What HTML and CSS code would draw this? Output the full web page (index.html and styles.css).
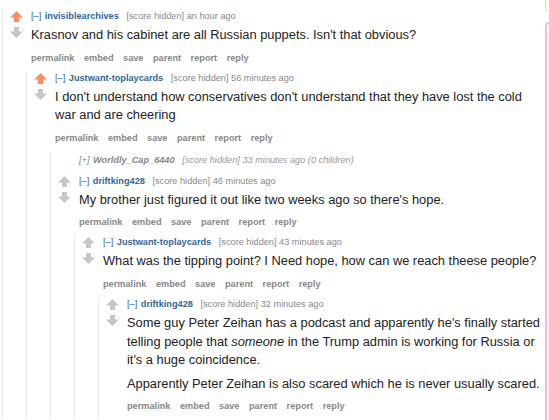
FILE: index.html
```html
<!DOCTYPE html>
<html>

<head>
    <title>Comments</title>
    <link rel="stylesheet" href="styles.css">
</head>

<body>
    <div class="page">
        <div class="thread">
            <div class="comment">
                <div class="row">
                    <div class="midcol">
                        <svg class="arrow up upmod" viewBox="0 0 15 14"><polygon points="7.5,1 14,7.5 10,7.5 10,12 5,12 5,7.5 1,7.5" /></svg>
                        <svg class="arrow down" viewBox="0 0 15 14"><polygon points="7.5,13 14,6.5 10,6.5 10,2 5,2 5,6.5 1,6.5" /></svg>
                    </div>
                    <div class="entry">
                        <p class="tagline"><a class="expand">[–]</a> <a class="author">invisiblearchives</a> <span class="score">[score hidden]</span> <span class="time">an hour ago</span></p>
                        <div class="md">
                            <p>Krasnov and his cabinet are all Russian puppets. Isn't that obvious?</p>
                        </div>
                        <ul class="flat-list">
                            <li>permalink</li><li>embed</li><li>save</li><li>parent</li><li>report</li><li>reply</li>
                        </ul>
                    </div>
                </div>

                <div class="comment">
                    <div class="row">
                        <div class="midcol">
                            <svg class="arrow up upmod" viewBox="0 0 15 14"><polygon points="7.5,1 14,7.5 10,7.5 10,12 5,12 5,7.5 1,7.5" /></svg>
                            <svg class="arrow down" viewBox="0 0 15 14"><polygon points="7.5,13 14,6.5 10,6.5 10,2 5,2 5,6.5 1,6.5" /></svg>
                        </div>
                        <div class="entry">
                            <p class="tagline"><a class="expand">[–]</a> <a class="author">Justwant-toplaycards</a> <span class="score">[score hidden]</span> <span class="time">56 minutes ago</span></p>
                            <div class="md">
                                <p>I don't understand how conservatives don't understand that they have lost the cold war and are cheering</p>
                            </div>
                            <ul class="flat-list">
                                <li>permalink</li><li>embed</li><li>save</li><li>parent</li><li>report</li><li>reply</li>
                            </ul>
                        </div>
                    </div>

                    <div class="comment collapsed">
                        <div class="row">
                            <div class="midcol"></div>
                            <div class="entry">
                                <p class="tagline"><a class="expand">[+]</a> <a class="author">Worldly_Cap_6440</a> <span class="score">[score hidden]</span> <span class="time">33 minutes ago</span> (0 children)</p>
                            </div>
                        </div>
                    </div>

                    <div class="comment">
                        <div class="row">
                            <div class="midcol">
                                <svg class="arrow up" viewBox="0 0 15 14"><polygon points="7.5,1 14,7.5 10,7.5 10,12 5,12 5,7.5 1,7.5" /></svg>
                                <svg class="arrow down" viewBox="0 0 15 14"><polygon points="7.5,13 14,6.5 10,6.5 10,2 5,2 5,6.5 1,6.5" /></svg>
                            </div>
                            <div class="entry">
                                <p class="tagline"><a class="expand">[–]</a> <a class="author">driftking428</a> <span class="score">[score hidden]</span> <span class="time">46 minutes ago</span></p>
                                <div class="md">
                                    <p>My brother just figured it out like two weeks ago so there's hope.</p>
                                </div>
                                <ul class="flat-list">
                                    <li>permalink</li><li>embed</li><li>save</li><li>parent</li><li>report</li><li>reply</li>
                                </ul>
                            </div>
                        </div>

                        <div class="comment">
                            <div class="row">
                                <div class="midcol">
                                    <svg class="arrow up" viewBox="0 0 15 14"><polygon points="7.5,1 14,7.5 10,7.5 10,12 5,12 5,7.5 1,7.5" /></svg>
                                    <svg class="arrow down" viewBox="0 0 15 14"><polygon points="7.5,13 14,6.5 10,6.5 10,2 5,2 5,6.5 1,6.5" /></svg>
                                </div>
                                <div class="entry">
                                    <p class="tagline"><a class="expand">[–]</a> <a class="author">Justwant-toplaycards</a> <span class="score">[score hidden]</span> <span class="time">43 minutes ago</span></p>
                                    <div class="md">
                                        <p>What was the tipping point? I Need hope, how can we reach theese people?</p>
                                    </div>
                                    <ul class="flat-list">
                                        <li>permalink</li><li>embed</li><li>save</li><li>parent</li><li>report</li><li>reply</li>
                                    </ul>
                                </div>
                            </div>

                            <div class="comment">
                                <div class="row">
                                    <div class="midcol">
                                        <svg class="arrow up" viewBox="0 0 15 14"><polygon points="7.5,1 14,7.5 10,7.5 10,12 5,12 5,7.5 1,7.5" /></svg>
                                        <svg class="arrow down" viewBox="0 0 15 14"><polygon points="7.5,13 14,6.5 10,6.5 10,2 5,2 5,6.5 1,6.5" /></svg>
                                    </div>
                                    <div class="entry">
                                        <p class="tagline"><a class="expand">[–]</a> <a class="author">driftking428</a> <span class="score">[score hidden]</span> <span class="time">32 minutes ago</span></p>
                                        <div class="md">
                                            <p>Some guy Peter Zeihan has a podcast and apparently he's finally started telling people that <em>someone</em> in the Trump admin is working for Russia or it's a huge coincidence.</p>
                                            <p>Apparently Peter Zeihan is also scared which he is never usually scared.</p>
                                        </div>
                                        <ul class="flat-list">
                                            <li>permalink</li><li>embed</li><li>save</li><li>parent</li><li>report</li><li>reply</li>
                                        </ul>
                                    </div>
                                </div>
                            </div>
                        </div>
                    </div>
                </div>
            </div>
        </div>

        <div class="side">
            <div class="box green"></div>
            <div class="box pink"></div>
        </div>
    </div>
</body>

</html>
```

FILE: styles.css
```css
body {
    margin: 0;
    background-color: white;
    font-family: 'Liberation Sans', Arial, sans-serif;
    color: #222;
    overflow: hidden;
}

.page {
    display: flex;
    height: 420px;
}

.thread {
    width: 543px;
    flex-shrink: 0;
    padding-left: 2px;
    padding-top: 9px;
}

.comment {
    border-left: 1px solid #e9e9f0;
    padding-left: 6px;
}

.comment .comment {
    margin-left: 17px;
}

.row {
    display: flex;
}

.midcol {
    width: 15px;
    margin-right: 7px;
    flex-shrink: 0;
    display: flex;
    flex-direction: column;
    align-items: center;
    padding-top: 1px;
}

.arrow {
    width: 15px;
    height: 14px;
    fill: #c6c6c6;
}

.arrow.down {
    margin-top: 1px;
}

.arrow.upmod {
    fill: #ff8b60;
}

.entry {
    flex: 1;
    min-width: 0;
}

.tagline {
    margin: 0;
    font-size: 9.2px;
    line-height: 14px;
    color: #888;
}

.tagline .expand {
    color: #369;
    margin-right: 1px;
}

.tagline .author {
    color: #369;
    font-weight: bold;
    margin-right: 5px;
}

.collapsed .tagline {
    font-style: italic;
    color: #999;
}

.collapsed .tagline .expand,
.collapsed .tagline .author {
    color: #888;
}

.collapsed {
    padding-top: 2px;
    padding-bottom: 7px;
}

.md {
    margin-top: 3px;
    font-size: 12.85px;
    line-height: 18.6px;
}

.md p {
    margin: 0 0 5px 0;
}

.md p:last-child {
    margin-bottom: 0;
}

.flat-list {
    list-style: none;
    margin: 6px 0 6px 0;
    padding: 0;
    font-size: 9.2px;
    line-height: 14px;
    font-weight: bold;
    color: #888;
}

.flat-list li {
    display: inline;
    padding-right: 9.5px;
}

.side {
    flex-shrink: 0;
    width: 300px;
}

.box {
    width: 300px;
    border-radius: 4px;
}

.green {
    height: 14px;
    margin-top: -4px;
    border: 1px solid #c9efbf;
    background-color: #f6fff2;
}

.pink {
    height: 420px;
    margin-top: 10px;
    border: 2px solid #f5b8ef;
    background-color: #fff8fd;
}
```
